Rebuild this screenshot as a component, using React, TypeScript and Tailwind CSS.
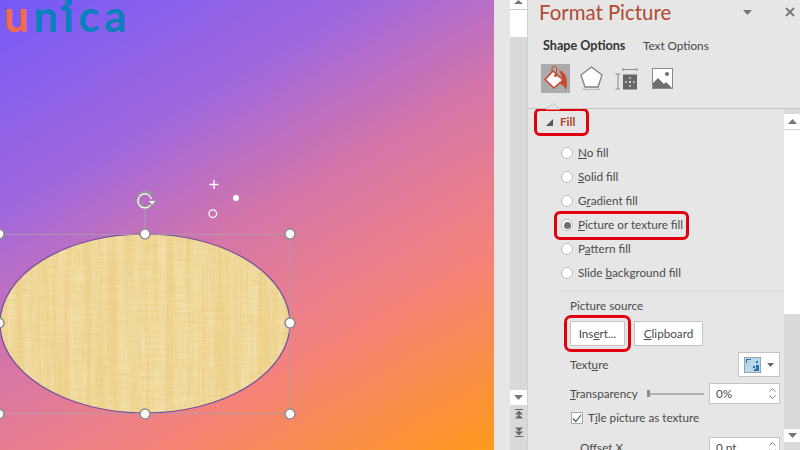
import React from "react";

function Handle({ x, y }: { x: number; y: number }) {
  return <circle cx={x} cy={y} r="5" fill="#fff" stroke="#8f8f8f" strokeWidth="1.6" />;
}

function Slide() {
  return (
    <div className="relative w-[494px] h-[450px] shrink-0 overflow-hidden bg-[linear-gradient(150deg,#7559f8_0%,#a268dc_30%,#d676a8_50%,#f4827c_72%,#ff9a1c_100%)]">
      <div className="absolute left-[4px] top-0 flex items-baseline font-['Lato',sans-serif] font-bold text-[44px] leading-[30px] tracking-[4.500px]">
        <span className="text-[#f26b4e]">u</span>
        <span className="text-[#0a80bd]">nica</span>
      </div>
      <svg className="absolute left-0 top-0" width="494" height="450" viewBox="0 0 494 450">
        <defs>
          <filter id="lh" x="0" y="0" width="100%" height="100%">
            <feTurbulence type="fractalNoise" baseFrequency="0.6 0.03" numOctaves="2" seed="4" result="a" />
            <feTurbulence type="fractalNoise" baseFrequency="0.03 0.6" numOctaves="2" seed="9" result="b" />
            <feBlend in="a" in2="b" mode="multiply" />
            <feColorMatrix type="matrix" values="0 0 0 0 0.8  0 0 0 0 0.58  0 0 0 0 0.2  2.2 0 0 0 -0.5" />
          </filter>
          <filter id="bd" x="0" y="0" width="100%" height="100%">
            <feTurbulence type="fractalNoise" baseFrequency="0.12 0.004" numOctaves="3" seed="12" />
            <feColorMatrix type="matrix" values="0 0 0 0 0.85  0 0 0 0 0.62  0 0 0 0 0.22  3 0 0 0 -1.1" />
          </filter>
          <clipPath id="ec">
            <ellipse cx="145" cy="323.500" rx="145" ry="89.500" />
          </clipPath>
        </defs>
        <path d="M60 8l5-3.500 5 3.500-2 1v2h-6v-2z" fill="#0a80bd" />
        <ellipse cx="145" cy="323.500" rx="145" ry="89.500" fill="#f4e2ae" />
        <g clipPath="url(#ec)">
          <rect x="0" y="234" width="290" height="179" filter="url(#bd)" opacity="0.6" />
          <rect x="0" y="234" width="290" height="179" filter="url(#lh)" opacity="0.6" />
        </g>
        <ellipse cx="145" cy="323.500" rx="145" ry="89.500" fill="none" stroke="#6f4d9e" strokeWidth="1.200" />
        <rect x="-1" y="234.500" width="291" height="179" fill="none" stroke="#a8a0a8" strokeWidth="0.8" />
        <line x1="145" y1="208" x2="145" y2="234" stroke="#a8a0a8" strokeWidth="1" />
        <path d="M151 205.500a7.500 7.500 0 1 1 0-11" fill="none" stroke="#9a9a9a" strokeWidth="3.600" />
        <path d="M148 200.500h10l-5 5.500z" fill="#9a9a9a" />
        <path d="M150.500 205a7 7 0 1 1 1-6" fill="none" stroke="#fff" strokeWidth="1.200" />
        <path d="M149 201h6l-3 3.500z" fill="#fff" />
        <Handle x={-1} y={234} />
        <Handle x={145} y={234} />
        <Handle x={290} y={234} />
        <Handle x={-1} y={323} />
        <Handle x={290} y={323} />
        <Handle x={-1} y={414} />
        <Handle x={145} y={414} />
        <Handle x={290} y={414} />
        <path d="M214 180v9M209.500 184.500h9" stroke="#fff" strokeWidth="1.300" fill="none" />
        <circle cx="236" cy="198" r="3" fill="#fff" />
        <circle cx="212.800" cy="213.700" r="3.800" fill="none" stroke="#fff" strokeWidth="1.300" />
      </svg>
    </div>
  );
}

function Arrow({ dir }: { dir: "up" | "down" }) {
  return (
    <svg width="9" height="5" viewBox="0 0 9 5">
      <path d={dir === "up" ? "M0 5L4.500 0L9 5z" : "M0 0L4.500 5L9 0z"} fill="#767676" />
    </svg>
  );
}

function OuterScroll() {
  return (
    <div className="w-[17px] h-[450px] shrink-0 bg-[#d9d9d9] flex flex-col items-stretch">
      <div className="h-[9px] bg-[#fff] flex items-start justify-center overflow-hidden">
        <svg width="9" height="4" viewBox="0 0 9 4"><path d="M0 4L4.500 0L9 4z" fill="#767676" /></svg>
      </div>
      <div className="h-[28px] bg-white border-t border-[#c8c8c8]" />
      <div className="flex-1" />
      <div className="h-[15px] bg-white flex items-center justify-center mb-[4px]"><Arrow dir="down" /></div>
      <div className="h-[10px] flex items-center justify-center mb-[8px]">
        <svg width="8" height="10" viewBox="0 0 8 10"><path d="M0 0h8v1H0zM4 1.500L8 5.500H0zM4 5.500L8 9.500H0z" fill="#666" /></svg>
      </div>
      <div className="h-[10px] flex items-center justify-center mb-[13px]">
        <svg width="8" height="10" viewBox="0 0 8 10"><path d="M0 .5H8L4 4.500zM0 4.500H8L4 8.500zM0 9h8v1H0z" fill="#666" /></svg>
      </div>
    </div>
  );
}

function Radio({ on }: { on?: boolean }) {
  return (
    <span className="w-[12px] h-[12px] rounded-full bg-white border border-[#bdbdbd] flex items-center justify-center shrink-0">
      {on && <span className="w-[7px] h-[7px] rounded-full bg-[#6f6f6f]" />}
    </span>
  );
}

function RadioRow({ children, on }: { children: React.ReactNode; on?: boolean }) {
  return (
    <div className="h-[24px] flex items-center">
      <span className={on ? "inline-flex items-center gap-[5px] h-[23px] ml-[-4px] pl-[4px] pr-[3px] rounded-[3px] outline-[3px] outline-[#e0000f]" : "inline-flex items-center gap-[5px]"}>
        <Radio on={on} />
        <span>{children}</span>
      </span>
    </div>
  );
}

function Tabs() {
  return (
    <div className="flex items-center mt-[13px] ml-[15px] h-[18px]">
      <span className="font-bold text-[#333] text-[12.600px] w-[100px]">Shape Options</span>
      <span className="text-[#444] text-[11.700px]">Text Options</span>
    </div>
  );
}

function IconRow() {
  return (
    <div className="flex items-center mt-[9px] ml-[13px] h-[29px]">
      <div className="w-[29px] h-[29px] bg-[#ababab]">
        <svg width="29" height="29" viewBox="0 0 29 29">
          <path d="M18 6Q26 8 26 20L25 26Q23 21 19 20L22 16z" fill="#c8492b" />
          <path d="M12 7L4 15.500L13 24L22 16z" fill="#fff" stroke="#c8492b" strokeWidth="1.600" />
          <path d="M11 8V4a2.300 2.300 0 0 1 4.500 0V11" fill="none" stroke="#c8492b" strokeWidth="1" />
          <circle cx="14.500" cy="11.500" r="1.500" fill="#c8492b" />
        </svg>
      </div>
      <div className="ml-[9px] w-[24px] flex justify-center">
        <svg width="23" height="25" viewBox="0 0 23 25">
          <path d="M11.500 1L22 9l-4 12H5L1 9z" fill="#fff" stroke="#808080" strokeWidth="1.300" />
          <path d="M3 24l2-3M20 24l-2-3M4 23.500h15" stroke="#b5b5b5" strokeWidth="1" fill="none" />
        </svg>
      </div>
      <div className="ml-[12px] w-[24px] flex justify-center">
        <svg width="24" height="24" viewBox="0 0 24 24">
          <path d="M8 2.500H22M8 1v3M22 1v3M.500 7H5M.500 22H5M3 7v15" stroke="#8a8a8a" strokeWidth="1" fill="none" />
          <rect x="8" y="7.500" width="14" height="15" fill="#666" />
          <path d="M15 10v10M10 15h10" stroke="#fff" strokeWidth="1" strokeDasharray="2 2" />
        </svg>
      </div>
      <div className="ml-[13px] w-[21px] flex justify-center">
        <svg width="21" height="21" viewBox="0 0 21 21">
          <rect x=".500" y=".500" width="20" height="20" fill="#fff" stroke="#8a8a8a" />
          <circle cx="15" cy="6" r="2" fill="#6f6f6f" />
          <path d="M1 20V15l5-5 6 6 2-2 6 6z" fill="#6f6f6f" />
        </svg>
      </div>
    </div>
  );
}

function InnerScroll() {
  return (
    <div className="w-[16px] shrink-0 self-stretch bg-[#d9d9d9] flex flex-col pt-[5px]">
      <div className="h-[16px] bg-white flex items-center justify-center border-b border-[#d0d0d0]">
        <svg width="9" height="5" viewBox="0 0 9 5"><path d="M0 5L4.500 0L9 5z" fill="#767676" /></svg>
      </div>
      <div className="h-[184px] bg-white" />
      <div className="flex-1" />
      <div className="h-[13px] bg-white flex items-center justify-center mb-[8px]"><Arrow dir="down" /></div>
    </div>
  );
}

function Spin() {
  return (
    <span className="flex flex-col items-center gap-[3px] mr-[3px]">
      <svg width="7" height="4" viewBox="0 0 7 4"><path d="M.500 3.500L3.500 .500L6.500 3.500" fill="none" stroke="#888" /></svg>
      <svg width="7" height="4" viewBox="0 0 7 4"><path d="M.500 .500L3.500 3.500L6.500 .500" fill="none" stroke="#888" /></svg>
    </span>
  );
}

function Options() {
  return (
    <div className="flex-1 min-w-0 overflow-hidden">
      <div className="h-[24px] mt-[1px] flex items-center pl-[9px]">
        <span className="inline-flex items-center h-[22px] w-[49px] pl-[9px] gap-[7px] rounded-[3px] outline-[3px] outline-[#e0000f]">
          <svg width="7" height="7" viewBox="0 0 7 7"><path d="M7 0V7H0z" fill="#555" /></svg>
          <span className="font-bold text-[#b5442a]">Fill</span>
        </span>
      </div>
      <div className="mt-[7px] ml-[33px]">
        <RadioRow><u>N</u>o fill</RadioRow>
        <RadioRow><u>S</u>olid fill</RadioRow>
        <RadioRow>G<u>r</u>adient fill</RadioRow>
        <RadioRow on><u>P</u>icture or texture fill</RadioRow>
        <RadioRow>P<u>a</u>ttern fill</RadioRow>
        <RadioRow>Slide <u>b</u>ackground fill</RadioRow>
      </div>
      <div className="mt-[6px] ml-[32px] border-t border-[#e1e1e1]" />
      <div className="ml-[42px] mr-[4px] mt-[5px]">
        <div className="h-[17px] leading-[17px]">Picture source</div>
        <div className="flex items-center mt-[7px] gap-[9px] h-[25px]">
          <span className="w-[55px] h-[25px] bg-white border border-[#c4c4c4] flex items-center justify-center rounded-[1px] outline-[3px] outline-offset-[3px] outline-[#e0000f]">Ins<u>e</u>rt...</span>
          <span className="w-[69px] h-[25px] bg-white border border-[#c4c4c4] flex items-center justify-center"><u>C</u>lipboard</span>
        </div>
        <div className="flex items-center justify-between h-[25px] mt-[6px]">
          <span>Text<u>u</u>re</span>
          <span className="w-[42px] h-[25px] bg-white border border-[#c4c4c4] flex items-center justify-center gap-[6px]">
            <svg width="17" height="16" viewBox="0 0 17 16">
              <rect width="17" height="16" fill="#b9d7ea" stroke="#777" />
              <path d="M2 2h5v1H3v3H2zM12 4h2v2h-2zM9 9h2v2H9zM12 8h3v6h-5v-2h2z" fill="#2a73ad" />
            </svg>
            <svg width="7" height="4" viewBox="0 0 7 4"><path d="M0 0h7L3.500 4z" fill="#666" /></svg>
          </span>
        </div>
        <div className="flex items-center h-[21px] mt-[6px]">
          <span className="w-[77px]"><u>T</u>ransparency</span>
          <span className="relative w-[57px] h-[7px] flex items-center">
            <span className="w-[3px] h-[7px] bg-[#8a8a8a]" />
            <span className="flex-1 h-[2px] bg-[#b0b0b0]" />
          </span>
          <span className="ml-[5px] w-[71px] h-[21px] bg-white border border-[#c4c4c4] flex items-center justify-between pl-[6px]">
            0%<Spin />
          </span>
        </div>
        <div className="flex items-center h-[14px] mt-[7px] gap-[5px] ml-[1px]">
          <span className="w-[12px] h-[12px] bg-white border border-[#aaa] flex items-center justify-center">
            <svg width="10" height="9" viewBox="0 0 10 9"><path d="M1 4.500L3.800 7.500L9 1" fill="none" stroke="#555" strokeWidth="1.200" /></svg>
          </span>
          <span>T<u>i</u>le picture as texture</span>
        </div>
        <div className="flex items-center h-[21px] mt-[12px] justify-between">
          <span className="ml-[10px]">Offset X</span>
          <span className="w-[71px] h-[21px] bg-white border border-[#c4c4c4] flex items-center justify-between pl-[6px]">
            0 pt<Spin />
          </span>
        </div>
      </div>
    </div>
  );
}

function Panel() {
  return (
    <div className="flex-1 min-w-0 h-[450px] bg-[#e6e6e6] border-l border-[#cfcfcf] flex flex-col font-['Lato',sans-serif] text-[11.700px] text-[#4a4a4a] overflow-hidden">
      <div className="flex items-center h-[24px] pl-[11px] pr-[5px]">
        <span className="flex-1 text-[#b04a33] text-[20.400px] leading-[26px]">Format Picture</span>
        <svg className="mr-[33px]" width="9" height="5" viewBox="0 0 9 5"><path d="M0 0h9L4.500 5z" fill="#777" /></svg>
        <svg width="10" height="10" viewBox="0 0 10 10"><path d="M1 1l8 8M9 1l-8 8" stroke="#777" strokeWidth="1.800" /></svg>
      </div>
      <Tabs />
      <IconRow />
      <div className="relative mt-[15px] h-0 border-t border-[#c4c4c4]">
        <svg className="absolute left-[18px] top-[-6px]" width="14" height="7" viewBox="0 0 14 7"><path d="M0 6.500L7 .500L14 6.500" fill="#e6e6e6" stroke="#c4c4c4" /></svg>
      </div>
      <div className="flex-1 min-h-0 flex">
        <Options />
        <InnerScroll />
      </div>
    </div>
  );
}

export default function App() {
  return (
    <div className="relative w-[800px] h-[450px] flex overflow-hidden bg-[#e6e6e6] font-['Lato',sans-serif]">
      <Slide />
      <div className="w-[16px] h-[450px] shrink-0 bg-[#e6e6e6]" />
      <OuterScroll />
      <Panel />
    </div>
  );
}
